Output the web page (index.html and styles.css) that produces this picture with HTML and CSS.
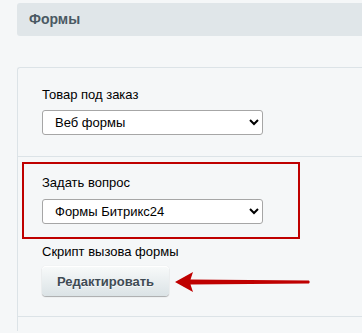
FILE: index.html
```html
<!DOCTYPE html>
<html lang="ru">
<head>
    <meta charset="UTF-8">
    <meta name="viewport" content="width=device-width, initial-scale=1.0">
    <title>Формы</title>
    <link rel="stylesheet" href="styles.css">
</head>
<body>
    <div class="page">
        <!-- Заголовок раздела -->
        <div class="section-title">Формы</div>

        <!-- Блок настроек -->
        <div class="settings">
            <div class="settings-row">
                <label class="field-label" for="orderForm">Товар под заказ</label>
                <select id="orderForm" class="field-select">
                    <option>Веб формы</option>
                    <option>Формы Битрикс24</option>
                </select>
            </div>

            <div class="settings-row settings-row-last">
                <div class="highlight">
                    <label class="field-label" for="questionForm">Задать вопрос</label>
                    <select id="questionForm" class="field-select">
                        <option>Формы Битрикс24</option>
                        <option>Веб формы</option>
                    </select>
                </div>

                <div class="field-label field-label-script">Скрипт вызова формы</div>
                <div class="btn-line">
                    <button type="button" class="edit-btn">Редактировать</button>
                    <svg class="pointer-arrow" width="136" height="22" viewBox="0 0 136 22">
                        <path d="M0 11 L18 1 L15.5 8.6 L134 9.6 Q135.6 11 134 12.4 L15.5 13.6 L18 21 Z" fill="#bf0000"/>
                    </svg>
                </div>
            </div>
        </div>

        <div class="settings settings-next"></div>
    </div>
</body>
</html>
```

FILE: styles.css
```css
* {
    margin: 0;
    padding: 0;
    box-sizing: border-box;
    font-family: "Liberation Sans", Arial, sans-serif;
}

body {
    height: 100vh;
    overflow: hidden;
    background-color: #f5f7f8;
}

.page {
    padding: 3px 0 0 17px;
}

.section-title {
    height: 33px;
    line-height: 33px;
    padding-left: 12px;
    background-color: #e0e6e9;
    border-radius: 3px 0 0 3px;
    color: #4a5963;
    font-size: 14px;
    font-weight: bold;
}

.settings {
    margin-top: 31px;
    background-color: #f5f7f8;
    border: 1px solid #dce3e7;
    border-right: none;
    border-bottom: none;
    border-radius: 3px 0 0 0;
}

.settings-row {
    padding: 19px 0 21px 24px;
    border-bottom: 1px solid #dce3e7;
}

.settings-row-last {
    padding: 5px 0 20px 4px;
}

.field-label {
    display: block;
    font-size: 13px;
    line-height: 15px;
    color: #000;
}

.field-select {
    display: block;
    width: 221px;
    height: 25px;
    margin-top: 8px;
    padding-left: 8px;
    border: 1px solid #a6a6a6;
    border-radius: 3px;
    background-color: #fff;
    color: #000;
    font-size: 13px;
}

.highlight {
    width: 278px;
    padding: 11px 0 13px 18px;
    border: 2px solid #bf0000;
}

.highlight .field-select {
    margin-top: 9px;
}

.field-label-script {
    margin: 5px 0 0 20px;
}

.btn-line {
    display: flex;
    align-items: center;
    margin: 7px 0 0 20px;
}

.edit-btn {
    height: 30px;
    width: 127px;
    border: none;
    border-radius: 4px;
    background: linear-gradient(to bottom, #f8fafa, #dbe3e6);
    box-shadow: 0 0 1px rgba(0,0,0,0.15), 0 1px 1px rgba(0,0,0,0.3), inset 0 1px #fff;
    color: #3f4b54;
    font-size: 13px;
    font-weight: bold;
    text-shadow: 0 1px rgba(255,255,255,0.7);
    cursor: pointer;
}

.pointer-arrow {
    margin: 2px 0 0 6px;
}

.settings-next {
    margin-top: 0;
    height: 14px;
    border-top: none;
    border-left: 1px solid #dce3e7;
    border-radius: 0;
}
```
